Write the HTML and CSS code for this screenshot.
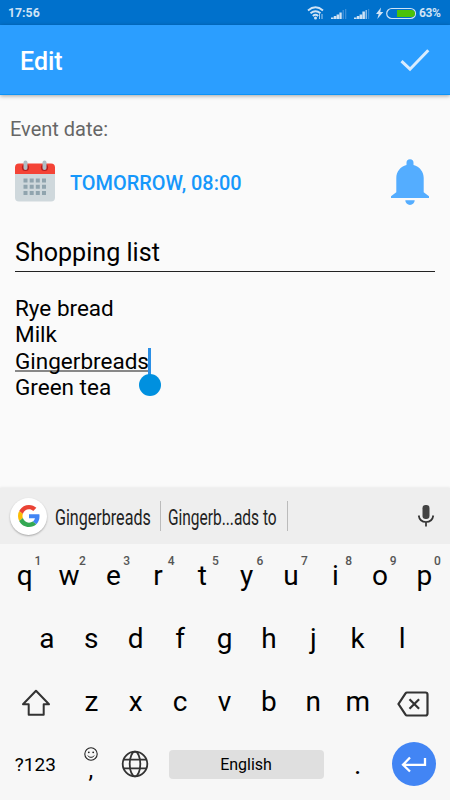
FILE: index.html
```html
<!DOCTYPE html>
<html lang="en">
<head>
    <meta charset="UTF-8">
    <meta name="viewport" content="width=device-width, initial-scale=1.0">
    <title>Edit</title>
    <link rel="stylesheet" href="styles.css">
</head>
<body>

    <div class="status-bar">
        <span class="clock">17:56</span>
        <svg class="status-icons" width="112" height="18" viewBox="0 0 112 18">
            <g fill="none" stroke="#cfe3f5" stroke-width="1.9">
                <path d="M1 6.500Q8.500 .2 16 6.500"/>
                <path d="M3.500 9.300Q8.500 5 13.500 9.300"/>
                <path d="M5.800 12Q8.500 9.600 11.200 12"/>
            </g>
            <circle cx="8.500" cy="14" r="1.500" fill="#cfe3f5"/>
            <path d="M12.500 10v5M15 10v5" stroke="#a9cdee" stroke-width="1"/>
            <path d="M24 15v-1.500h2.500V15zM26.800 15v-3h2.500v3zM29.600 15v-4.500h2.500V15zM32.400 15V8.500h2.300V15z" fill="#cfe3f5"/>
            <path d="M35.500 15V6h1.500v9zM38 15V5h1.300v10z" fill="#3c8fd8"/>
            <path d="M47 15v-1.500h2.500V15zM49.800 15v-3h2.500v3zM52.600 15v-4.500h2.500V15zM55.400 15V7.500h2.500V15z" fill="#cfe3f5"/>
            <path d="M58.500 15V6H60v9z" fill="#8dbde8"/>
            <path d="M61 15V5h1.200v10z" fill="#3c8fd8"/>
            <path d="M74 3.500l-5 6.500h2.700L70.300 15l6-7h-3z" fill="#cfe3f5"/>
            <rect x="79.700" y="4.500" width="28.800" height="10" rx="5" fill="none" stroke="#cfe3f5" stroke-width="1.200"/>
            <path d="M90 6h14.500a3.500 3.500 0 0 1 0 7H90z" fill="#4bc20a"/>
        </svg>
        <span class="percent">63%</span>
    </div>

    <div class="toolbar">
        <h1>Edit</h1>
        <svg width="30" height="24" viewBox="0 0 30 24">
            <path d="M1.500 13.200l8.500 8L28.300 2.200" fill="none" stroke="#d9ecfe" stroke-width="3"/>
        </svg>
    </div>

    <div class="content">
        <div class="label">Event date:</div>
        <div class="date-row">
            <svg class="calendar" width="42" height="42" viewBox="0 0 42 42">
                <path d="M1 13h40v24.500a4 4 0 0 1-4 4H5a4 4 0 0 1-4-4z" fill="#cfd8dc"/>
                <path d="M1 14V7.500a4 4 0 0 1 4-4h32a4 4 0 0 1 4 4V14z" fill="#f44336"/>
                <circle cx="11.500" cy="7.500" r="3.600" fill="#b71c1c"/>
                <circle cx="30.500" cy="7.500" r="3.600" fill="#b71c1c"/>
                <rect x="9.500" y=".5" width="4" height="9.500" rx="2" fill="#b0bec5"/>
                <rect x="28.500" y=".5" width="4" height="9.500" rx="2" fill="#b0bec5"/>
                <path d="M9.500 18.500h4v4h-4zM15.700 18.500h4v4h-4zM21.800 18.500h4v4h-4zM28 18.500h4v4h-4zM9.500 24.700h4v4h-4zM15.700 24.700h4v4h-4zM21.800 24.700h4v4h-4zM28 24.700h4v4h-4zM9.500 31h4v4h-4zM15.700 31h4v4h-4zM21.800 31h4v4h-4zM28 31h4v4h-4z" fill="#90a4ae"/>
            </svg>
            <span class="date">TOMORROW, 08:00</span>
            <svg class="bell" width="38" height="46" viewBox="0 0 38 46">
                <path d="M15.500 6V3.700a3.500 3.500 0 0 1 7 0V6C28.500 7.500 32.700 12.500 32.700 19v14.300l5.300 4V39H0v-1.700l5.300-4V19c0-6.500 4.200-11.500 10.200-13z" fill="#54adff"/>
                <path d="M14.300 41.300h9.400a4.700 4.700 0 0 1-9.400 0z" fill="#54adff"/>
            </svg>
        </div>
        <div class="title-field">Shopping list</div>
        <div class="note">
            <div>Rye bread</div>
            <div>Milk</div>
            <div><span class="composing">Gingerbreads<i class="cursor"></i></span></div>
            <div>Green tea</div>
        </div>
    </div>

    <div class="suggestions">
        <div class="google">
            <svg width="22" height="22" viewBox="0 0 48 48">
                <path fill="#ea4335" d="M24 9.500c3.540 0 6.710 1.220 9.210 3.600l6.850-6.850C35.900 2.380 30.470 0 24 0 14.620 0 6.510 5.380 2.560 13.220l7.980 6.190C12.430 13.720 17.740 9.500 24 9.500z"/>
                <path fill="#4285f4" d="M46.980 24.550c0-1.570-.15-3.090-.38-4.550H24v9.020h12.940c-.58 2.960-2.260 5.480-4.780 7.180l7.730 6c4.510-4.180 7.090-10.360 7.090-17.650z"/>
                <path fill="#fbbc05" d="M10.530 28.590c-.48-1.450-.76-2.990-.76-4.590s.27-3.140.76-4.590l-7.980-6.190C.92 16.460 0 20.120 0 24s.92 7.540 2.560 10.780z"/>
                <path fill="#34a853" d="M24 48c6.480 0 11.930-2.130 15.890-5.810l-7.730-6c-2.150 1.450-4.920 2.300-8.160 2.300-6.260 0-11.570-4.220-13.470-9.910l-7.980 6.190C6.510 42.620 14.620 48 24 48z"/>
            </svg>
        </div>
        <div class="word first"><span>Gingerbreads</span></div>
        <div class="word second"><span>Gingerb...ads to</span></div>
        <svg class="mic" width="18" height="24" viewBox="0 0 18 24">
            <rect x="5.500" y="1" width="7" height="14" rx="3.200" fill="#424242"/>
            <path d="M1.700 11.500c.6 4 3.600 6.500 7.300 6.500s6.700-2.500 7.300-6.500M9 18v4.500" fill="none" stroke="#333" stroke-width="1.700"/>
        </svg>
    </div>

    <div class="keyboard">
        <div class="row">
            <div class="key">q<sup>1</sup></div>
            <div class="key">w<sup>2</sup></div>
            <div class="key">e<sup>3</sup></div>
            <div class="key">r<sup>4</sup></div>
            <div class="key">t<sup>5</sup></div>
            <div class="key">y<sup>6</sup></div>
            <div class="key">u<sup>7</sup></div>
            <div class="key">i<sup>8</sup></div>
            <div class="key">o<sup>9</sup></div>
            <div class="key">p<sup>0</sup></div>
        </div>
        <div class="row">
            <div class="key">a</div>
            <div class="key">s</div>
            <div class="key">d</div>
            <div class="key">f</div>
            <div class="key">g</div>
            <div class="key">h</div>
            <div class="key">j</div>
            <div class="key">k</div>
            <div class="key">l</div>
        </div>
        <div class="row">
            <div class="key wide">
                <svg class="shift" width="30" height="28" viewBox="0 0 30 28">
                    <path d="M15 1.700L28 15.300h-5.300v10.500H7.700V15.300H2z" fill="none" stroke="#333" stroke-width="2" stroke-linejoin="round"/>
                </svg>
            </div>
            <div class="key">z</div>
            <div class="key">x</div>
            <div class="key">c</div>
            <div class="key">v</div>
            <div class="key">b</div>
            <div class="key">n</div>
            <div class="key">m</div>
            <div class="key wide">
                <svg class="backspace" width="32" height="26" viewBox="0 0 32 26">
                    <path d="M10 1.500h18.500a2 2 0 0 1 2 2v19a2 2 0 0 1-2 2H10a2 2 0 0 1-1.500-.8L1.500 13l7-10.700A2 2 0 0 1 10 1.500z" fill="none" stroke="#333" stroke-width="2.200"/>
                    <path d="M12.500 8.200l9.600 9.600M22.100 8.200l-9.600 9.600" stroke="#333" stroke-width="2.200"/>
                </svg>
            </div>
        </div>
        <div class="row bottom">
            <div class="key symbols">?123</div>
            <div class="key comma">
                <svg width="14" height="14" viewBox="0 0 14 14">
                    <circle cx="7" cy="7" r="6.200" fill="none" stroke="#222" stroke-width="1.100"/>
                    <circle cx="4.800" cy="5.300" r=".9" fill="#222"/>
                    <circle cx="9.200" cy="5.300" r=".9" fill="#222"/>
                    <path d="M3.800 8.600c1.300 2.300 5.100 2.300 6.400 0" fill="none" stroke="#222" stroke-width="1"/>
                </svg>
                <span>,</span>
            </div>
            <div class="key">
                <svg width="28" height="28" viewBox="0 0 28 28">
                    <g fill="none" stroke="#333" stroke-width="1.800">
                        <circle cx="14" cy="14" r="12.300"/>
                        <ellipse cx="14" cy="14" rx="5.300" ry="12.300"/>
                        <path d="M2.500 9.700h23M2.500 18.300h23"/>
                    </g>
                </svg>
            </div>
            <div class="space">English</div>
            <div class="key dot">.</div>
            <div class="enter">
                <svg width="26" height="18" viewBox="0 0 26 18">
                    <path d="M24 3v6.800H2.500M9 2.500L2 9.800l7 6.700" fill="none" stroke="#fff" stroke-width="2.300"/>
                </svg>
            </div>
        </div>
    </div>

</body>
</html>
```
FILE: styles.css
```css
* {
    box-sizing: border-box;
}

body {
    margin: 0;
    width: 450px;
    height: 800px;
    display: flex;
    flex-direction: column;
    overflow: hidden;
    font-family: Roboto, sans-serif;
    background-color: #fafafa;
    color: #000;
}

svg {
    display: block;
    flex-shrink: 0;
}

.status-bar {
    height: 25px;
    display: flex;
    align-items: center;
    padding: 1px 8px 0;
    background-color: #0071cc;
    color: #cfe3f5;
    font-size: 12px;
    font-weight: bold;
}

.clock {
    font-size: 12.3px;
}

.status-icons {
    margin: -1px 0 0 auto;
}

.percent {
    width: 23px;
    letter-spacing: -0.4px;
}

.toolbar {
    height: 70px;
    flex-shrink: 0;
    display: flex;
    align-items: center;
    justify-content: space-between;
    padding: 1px 20px 0;
    background-color: #2b9eff;
    border-bottom: 1px solid #0b93f8;
    box-shadow: 0 1px 4px rgba(0, 0, 0, 0.35);
}

.toolbar h1 {
    margin: 3px 0 0;
    color: white;
    font-size: 25px;
    font-weight: 500;
}

.content {
    height: 393px;
    flex-shrink: 0;
    padding: 22px 15px 0;
}

.label {
    margin-left: -5px;
    font-size: 20px;
    line-height: 25px;
    color: #666;
}

.date-row {
    height: 46px;
    margin-top: 17px;
    padding-right: 6px;
    display: flex;
    align-items: center;
}

.calendar {
    margin: -3px 0 0 -1px;
}

.date {
    margin: 2px 0 0 14px;
    font-size: 19.9px;
    font-weight: 500;
    color: #1597fb;
}

.bell {
    margin-left: auto;
}

.title-field {
    height: 67px;
    padding-top: 33px;
    border-bottom: 1px solid #222;
    font-size: 25.1px;
    line-height: 30px;
}

.note {
    margin-top: 23px;
    font-size: 22.5px;
    line-height: 26.3px;
}

.composing {
    position: relative;
    display: inline-block;
    height: 24px;
    border-bottom: 2px solid #888;
    vertical-align: top;
}

.cursor {
    position: absolute;
    top: 0;
    right: -2px;
    width: 3px;
    height: 27px;
    background-color: #2b8fe6;
}

.cursor::after {
    content: "";
    position: absolute;
    top: 26px;
    left: -9px;
    width: 22px;
    height: 22px;
    border-radius: 50%;
    background-color: #0090df;
}

.suggestions {
    height: 56px;
    flex-shrink: 0;
    display: flex;
    align-items: center;
    padding: 0 15px 0 10px;
    background-color: #eee;
    box-shadow: 0 -1px 2px rgba(0, 0, 0, 0.06);
}

.google {
    width: 37px;
    height: 37px;
    display: flex;
    align-items: center;
    justify-content: center;
    background-color: white;
    border-radius: 50%;
    box-shadow: 0 1px 2px rgba(0, 0, 0, 0.3);
}

.word {
    height: 30px;
    border-right: 1px solid #bbb;
    font-size: 22.5px;
    line-height: 33px;
    color: #222;
    white-space: nowrap;
}

.word span {
    display: inline-block;
    transform: scaleX(0.715);
    transform-origin: left;
}

.first {
    width: 114px;
    padding-left: 8px;
}

.second {
    width: 127px;
    padding-left: 7px;
}

.second span {
    transform: scaleX(0.688);
}

.mic {
    margin-left: auto;
}

.keyboard {
    flex: 1;
    background-color: #f7f7f7;
}

.row {
    height: 63px;
    display: flex;
    justify-content: center;
    padding-right: 1px;
}

.key {
    position: relative;
    width: 44.4px;
    display: flex;
    align-items: center;
    justify-content: center;
    font-size: 28px;
}

.key sup {
    position: absolute;
    top: 10px;
    left: 32px;
    font-size: 12px;
    line-height: 14px;
    font-weight: 500;
    color: #555;
}

.wide {
    width: 66.75px;
}

.shift {
    margin-top: 2px;
}

.backspace {
    margin: 4px 0 0;
}

.bottom {
    height: 62px;
    justify-content: flex-start;
    padding-left: 2px;
}

.symbols {
    width: 66.75px;
    font-size: 19px;
}

.comma {
    flex-direction: column;
    justify-content: flex-start;
    padding-top: 14px;
}

.comma span {
    font-size: 24px;
    line-height: 18px;
}

.space {
    width: 155px;
    height: 29px;
    margin: 17px 12px 0 11px;
    border-radius: 4px;
    background-color: #dfdfdf;
    font-size: 16px;
    line-height: 30px;
    text-align: center;
}

.enter {
    width: 44px;
    height: 44px;
    margin: 9px 0 0 12px;
    display: flex;
    align-items: center;
    justify-content: center;
    border-radius: 50%;
    background-color: #4285f4;
}
```
